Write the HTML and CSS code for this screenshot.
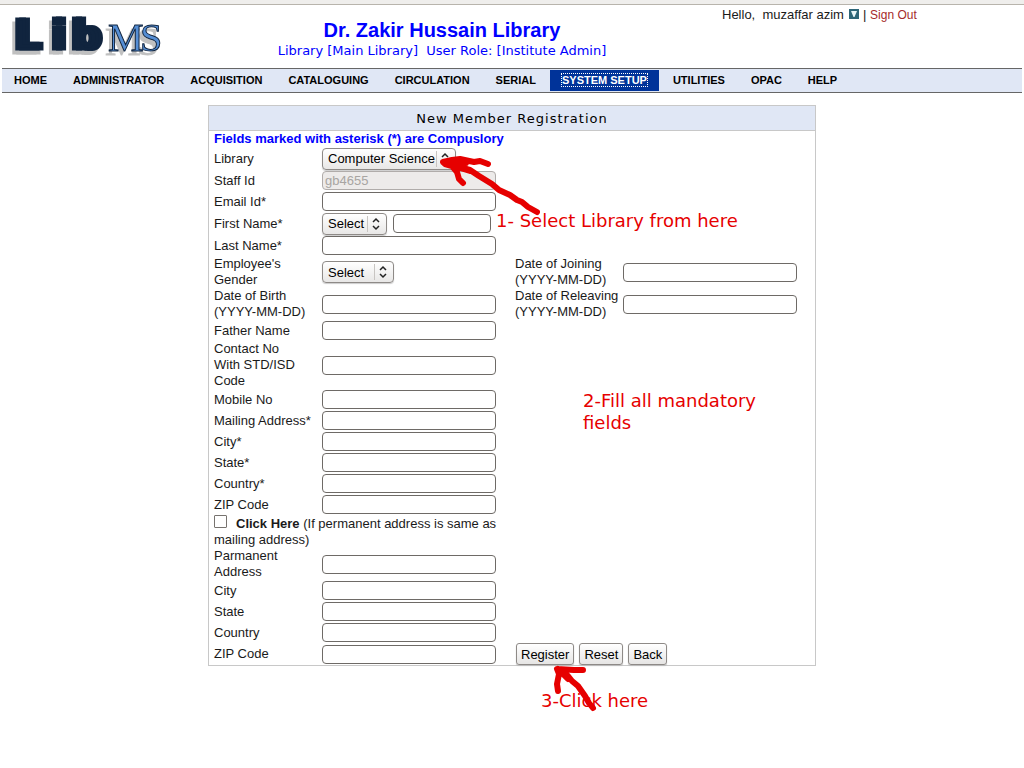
FILE: index.html
```html
<!DOCTYPE html>
<html lang="en">
<head>
<meta charset="utf-8">
<title>New Member Registration</title>
<link rel="stylesheet" href="styles.css">
</head>
<body>
<div class="topline"></div>
<header class="header">
  <svg class="logo" width="160" height="48" viewBox="0 0 160 48" role="img" aria-label="LibMS">
    <g class="logo-lib"><text x="9" y="42">L</text><text x="46" y="42">i</text><text x="66" y="42">b</text></g>
    <g class="logo-ms"><text x="104" y="44">M</text><text x="136" y="44">S</text></g>
  </svg>
  <div class="heading">
    <h1 class="site-title">Dr. Zakir Hussain Library</h1>
    <p class="site-role">Library [Main Library]&nbsp; User Role: [Institute Admin]</p>
  </div>
  <div class="user">Hello,&nbsp; muzaffar azim
    <button class="user-menu" type="button" aria-label="User menu"><svg width="10" height="10" viewBox="0 0 10 10"><path class="menu-box" d="M0 0h10v10H0z"/><path class="menu-arrow" d="M2 2h6L5.500 8h-1z"/></svg></button>
    | <a class="signout" href="#">Sign Out</a></div>
</header>
<nav class="nav">
  <a href="#">HOME</a><a href="#">ADMINISTRATOR</a><a href="#">ACQUISITION</a><a href="#">CATALOGUING</a><a href="#">CIRCULATION</a><a href="#">SERIAL</a><a class="active" href="#"><span>SYSTEM SETUP</span></a><a href="#">UTILITIES</a><a href="#">OPAC</a><a href="#">HELP</a>
</nav>
<main class="panel">
  <h2 class="panel-title">New Member Registration</h2>
  <form class="form">
    <p class="note">Fields marked with asterisk (*) are Compuslory</p>
    <div class="row row-select"><label for="library">Library</label><div><select class="select select-wide" id="library"><option>Computer Science</option></select></div></div>
    <div class="row"><label for="staff">Staff Id</label><input class="input" id="staff" type="text" value="gb4655" disabled></div>
    <div class="row"><label for="email">Email Id*</label><input class="input" id="email" type="text"></div>
    <div class="row row-select"><label for="first">First Name*</label><div class="pair"><select class="select" aria-label="Title"><option>Select</option></select><input class="input input-short" id="first" type="text"></div></div>
    <div class="row"><label for="last">Last Name*</label><input class="input" id="last" type="text"></div>
    <div class="row"><label for="gender">Employee's Gender</label><div><select class="select select-mid" id="gender"><option>Select</option></select></div><label for="joining">Date of Joining (YYYY-MM-DD)</label><input class="input" id="joining" type="text"></div>
    <div class="row"><label for="birth">Date of Birth (YYYY-MM-DD)</label><input class="input" id="birth" type="text"><label for="releaving">Date of Releaving (YYYY-MM-DD)</label><input class="input" id="releaving" type="text"></div>
    <div class="row"><label for="father">Father Name</label><input class="input" id="father" type="text"></div>
    <div class="row"><label for="contact">Contact No<br>With STD/ISD Code</label><input class="input" id="contact" type="text"></div>
    <div class="row"><label for="mobile">Mobile No</label><input class="input" id="mobile" type="text"></div>
    <div class="row"><label for="mail">Mailing Address*</label><input class="input" id="mail" type="text"></div>
    <div class="row"><label for="city">City*</label><input class="input" id="city" type="text"></div>
    <div class="row"><label for="state">State*</label><input class="input" id="state" type="text"></div>
    <div class="row"><label for="country">Country*</label><input class="input" id="country" type="text"></div>
    <div class="row"><label for="zip">ZIP Code</label><input class="input" id="zip" type="text"></div>
    <p class="same"><input class="check" id="same" type="checkbox"><label for="same"><b>Click Here</b> (If permanent address is same as mailing address)</label></p>
    <div class="row"><label for="paddress">Parmanent Address</label><input class="input" id="paddress" type="text"></div>
    <div class="row"><label for="pcity">City</label><input class="input" id="pcity" type="text"></div>
    <div class="row"><label for="pstate">State</label><input class="input" id="pstate" type="text"></div>
    <div class="row"><label for="pcountry">Country</label><input class="input" id="pcountry" type="text"></div>
    <div class="row"><label for="pzip">ZIP Code</label><input class="input" id="pzip" type="text"><div class="actions"><button class="button" type="button">Register</button><button class="button" type="reset">Reset</button><button class="button" type="button">Back</button></div></div>
  </form>
  <p class="callout callout-library">1- Select Library from here</p>
  <p class="callout callout-fields">2-Fill all mandatory fields</p>
  <p class="callout callout-click">3-Click here</p>
  <svg class="arrow arrow-library" width="110" height="70" viewBox="0 0 110 70" aria-hidden="true"><path d="M13 12L22 10 30 9 44 12 50 11 58 14M14 13L24 11 36 13M14 13L40 20 49 26 62 34 69 40 80 45 87 50 92 52 98 57 107 62M15 14L22 16 27 22 29 29 33 33M16 13L27 17 40 21"/></svg>
  <svg class="arrow arrow-click" width="60" height="60" viewBox="0 0 60 60" aria-hidden="true"><path d="M9 34L8 27 10 17 8 12 25 13 34 13M9 12L19 19 23 24 29 29 36 39 40 46 44 51M11 14L19 22"/></svg>
</main>
</body>
</html>
```

FILE: styles.css
```css
* { box-sizing: border-box; }
body { margin: 0; min-height: 100vh; background: #fff; color: #1a1a1a; font: 13px/16px "Liberation Sans", Arial, sans-serif; }
h1, h2, p { margin: 0; }
.topline { height: 5px; background: #efeeec; border-bottom: 1px solid #b8b4ac; }
.header { display: grid; grid-template-columns: 180px 524fr 320fr; height: 63px; }
.logo { margin: 2px 0 0 4px; overflow: visible; filter: drop-shadow(-3px 4px 0 #c0c0c0); }
.logo-lib { font: bold 41px "DejaVu Sans", sans-serif; fill: #10243e; stroke: #10243e; stroke-width: 3px; filter: drop-shadow(4px 0 0 #10243e); }
.logo-ms { font: 40px "Liberation Serif", serif; fill: #558ed5; stroke: #10243e; stroke-width: 1px; }
.heading { padding-top: 13px; text-align: center; color: #00f; }
.site-title { font-size: 20px; line-height: 24px; color: #00f; }
.site-role { font: 13px/18px "DejaVu Sans", sans-serif; }
.user { padding: 2px 0 0 18px; white-space: nowrap; }
.user-menu { margin-left: 2px; padding: 0; border: 0; background: none; height: 10px; line-height: 10px; vertical-align: 0; }
.user-menu svg { display: block; }
.menu-box { fill: #2c6577; }
.menu-arrow { fill: #e8f5f7; }
.signout { color: #a52a2a; text-decoration: none; font-size: 12px; }
.nav { display: flex; gap: 2px; margin: 0 2px; padding: 1px 0; background: #e0e7f5; border-top: 1px solid #666; border-bottom: 1px solid #666; }
.nav a { padding: 3px 12px 4px; font-size: 11px; line-height: 14px; font-weight: bold; color: #000; text-decoration: none; }
.nav .active { background: #039; color: #fff; }
.active span { outline: 1px dotted #fff; }
.panel { position: relative; max-width: 608px; margin: 12px auto 0; border: 1px solid #c8c8c8; }
.panel-title { height: 25px; background: #e0e7f5; border-bottom: 1px solid #c8c8c8; text-align: center; color: #000; font: 13px/26px "DejaVu Sans", sans-serif; letter-spacing: 1px; }
.form { padding-left: 5px; }
.note { color: #00f; font-weight: bold; }
.row { display: grid; grid-template-columns: 108px 193px 108px 1fr; align-items: center; min-height: 21px; }
.row-select { min-height: 23px; }
.row label { padding-right: 4px; }
.input { width: 174px; height: 19px; padding: 0 2px; border: 1px solid #6e6a66; border-radius: 4px; background: #fff; font: 13px "Liberation Sans", Arial, sans-serif; }
.input:disabled { background: #edebea; color: #a8a5a2; border-color: #b0acaa; }
.input-short { width: 98px; }
.pair { display: flex; align-items: center; gap: 6px; }
.select { display: block; appearance: none; width: 65px; height: 22px; padding: 0 5px; border: 1px solid #8e8a87; border-radius: 4px; color: #000; font: 13px "Liberation Sans", Arial, sans-serif; background: url("data:image/svg+xml,%3Csvg xmlns='http://www.w3.org/2000/svg' width='20' height='20'%3E%3Cpath d='M1.500 2v16' stroke='%23c8c5c2'/%3E%3Cpath d='M7 8l3-3 3 3M7 12l3 3 3-3' fill='none' stroke='%23222' stroke-width='1.500'/%3E%3C/svg%3E") right center no-repeat, linear-gradient(#fff, #e8e7e6); box-shadow: 0 1px 1px #ccc; }
.select-mid { width: 72px; }
.select-wide { width: 134px; }
.same { width: 300px; }
.check { appearance: none; width: 13px; height: 13px; margin: 0 9px 0 0; border: 1px solid #77736f; border-radius: 1px; background: #fff; vertical-align: 0; }
.actions { display: flex; gap: 5px; padding-left: 1px; }
.button { height: 22px; padding: 0 4px; border: 1px solid #8e8a87; border-radius: 3px; background: linear-gradient(#fff, #e6e5e4); color: #000; font: 13px "Liberation Sans", Arial, sans-serif; box-shadow: 0 1px 1px #bbb; }
.callout { position: absolute; color: #e60000; font: 18px/22px "DejaVu Sans", sans-serif; white-space: nowrap; }
.callout-library { left: 287px; top: 104px; }
.callout-fields { left: 374px; top: 284px; width: 200px; white-space: normal; }
.callout-click { left: 332px; top: 584px; }
.arrow { position: absolute; fill: none; stroke: #e60000; stroke-width: 6px; stroke-linecap: round; stroke-linejoin: round; pointer-events: none; }
.arrow-library { left: 221px; top: 44px; }
.arrow-click { left: 340px; top: 551px; }
```
